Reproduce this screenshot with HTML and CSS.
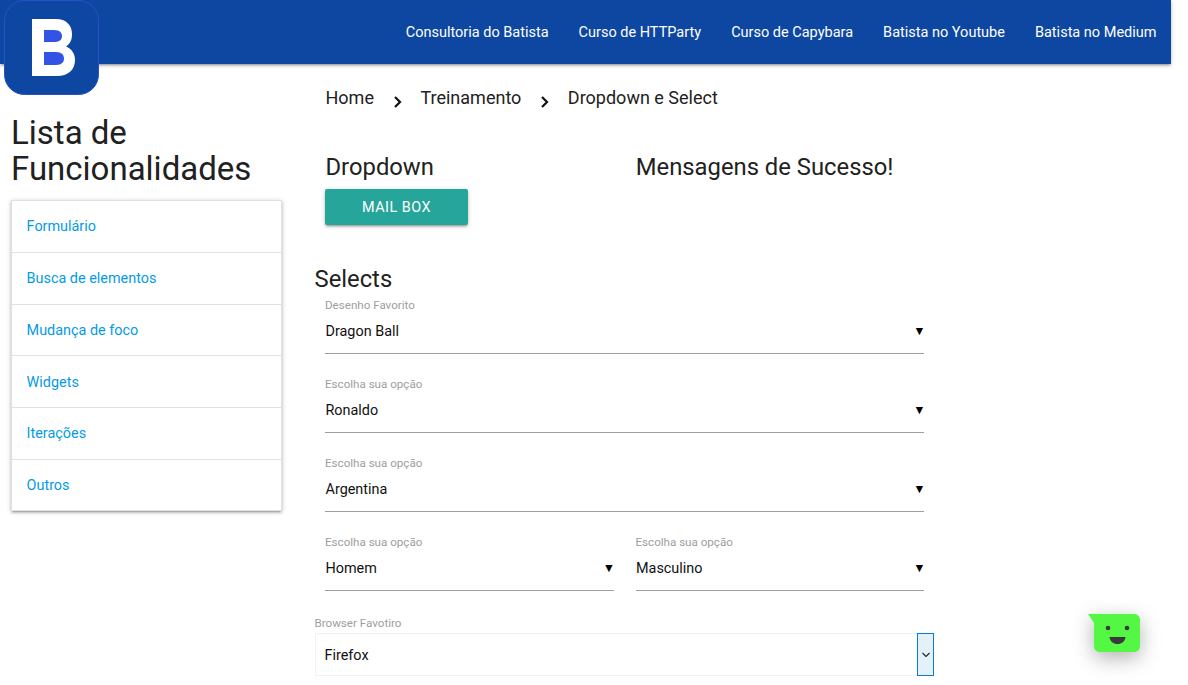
FILE: index.html
```html
<!DOCTYPE html>
<html lang="pt-BR">
<head>
  <meta charset="UTF-8">
  <meta name="viewport" content="width=device-width, initial-scale=1.0">
  <title>Dropdown e Select</title>
  <link rel="stylesheet" href="styles.css">
</head>
<body>
  <div class="page">
    <!-- barra do topo -->
    <nav class="topbar">
      <a href="#">Consultoria do Batista</a>
      <a href="#">Curso de HTTParty</a>
      <a href="#">Curso de Capybara</a>
      <a href="#">Batista no Youtube</a>
      <a href="#">Batista no Medium</a>
    </nav>
    <a class="logo" href="#" aria-label="Batista">
      <svg viewBox="0 0 95 95" width="95" height="95">
        <rect x="0.5" y="0.5" width="94" height="94" rx="20" fill="#0e47a1" stroke="#2b4fc4"/>
        <path fill="#fff" d="M28 19H52C62 19 68 25 68 34C68 40 66 44 62 46.500C68 49 71 54 71 60C71 70 64 76 53 76H28Z"/>
        <path fill="#3353e4" d="M40 30H50C56 30 58 33 58 36C58 39.500 56 42 50 42H40ZM40 52H52C58 52 60 55 60 58.500C60 62 58 65 52 65H40Z"/>
      </svg>
    </a>

    <div class="content">
      <!-- menu lateral -->
      <aside class="sidebar">
        <h3 class="sidebar-title">Lista de Funcionalidades</h3>
        <ul class="menu">
          <li><a href="#">Formulário</a></li>
          <li><a href="#">Busca de elementos</a></li>
          <li><a href="#">Mudança de foco</a></li>
          <li><a href="#">Widgets</a></li>
          <li><a href="#">Iterações</a></li>
          <li><a href="#">Outros</a></li>
        </ul>
      </aside>

      <main class="main">
        <div class="breadcrumb">
          <a href="#">Home</a>
          <svg class="crumb-arrow" viewBox="0 0 10 12" width="10" height="12"><path d="M2 1l5 5-5 5" fill="none" stroke="#111" stroke-width="2.200"/></svg>
          <a href="#">Treinamento</a>
          <svg class="crumb-arrow" viewBox="0 0 10 12" width="10" height="12"><path d="M2 1l5 5-5 5" fill="none" stroke="#111" stroke-width="2.200"/></svg>
          <a href="#">Dropdown e Select</a>
        </div>

        <div class="cols top-cols">
          <div class="col">
            <h5 class="section-title">Dropdown</h5>
            <button class="btn" type="button">MAIL BOX</button>
          </div>
          <div class="col">
            <h5 class="section-title">Mensagens de Sucesso!</h5>
          </div>
        </div>

        <h5 class="selects-title">Selects</h5>

        <div class="field">
          <label>Desenho Favorito</label>
          <div class="fake-select"><span>Dragon Ball</span><i>▼</i></div>
        </div>
        <div class="field">
          <label>Escolha sua opção</label>
          <div class="fake-select"><span>Ronaldo</span><i>▼</i></div>
        </div>
        <div class="field">
          <label>Escolha sua opção</label>
          <div class="fake-select"><span>Argentina</span><i>▼</i></div>
        </div>
        <div class="cols">
          <div class="field col">
            <label>Escolha sua opção</label>
            <div class="fake-select"><span>Homem</span><i>▼</i></div>
          </div>
          <div class="field col">
            <label>Escolha sua opção</label>
            <div class="fake-select"><span>Masculino</span><i>▼</i></div>
          </div>
        </div>

        <div class="browser-field">
          <label>Browser Favotiro</label>
          <div class="browser-select">
            <span>Firefox</span>
            <div class="browser-arrow">
              <svg viewBox="0 0 10 6" width="10" height="6"><path d="M1.500 1l3.500 3.500L8.500 1" fill="none" stroke="#222" stroke-width="1.100"/></svg>
            </div>
          </div>
        </div>
      </main>
    </div>
  </div>

  <!-- widget de chat -->
  <div class="chat-widget">
    <svg viewBox="0 0 52 38" width="52" height="38">
      <path fill="#55f745" d="M0 0H46C49.500 0 52 2.500 52 6V32C52 35.500 49.500 38 46 38H12C8.500 38 6 35.500 6 32V9Z"/>
      <circle cx="20" cy="14" r="2.300" fill="#3a3a3a"/>
      <circle cx="39" cy="14" r="2.300" fill="#3a3a3a"/>
      <path fill="#3a3a3a" d="M21.500 23H37.500C37 27.500 33.500 30 29.500 30C25.500 30 22 27.500 21.500 23Z"/>
    </svg>
  </div>
</body>
</html>
```

FILE: styles.css
```css
* {
  box-sizing: border-box;
}
html, body {
  height: 685px;
  overflow: hidden;
}
body {
  margin: 0;
  background: #fff;
  color: #212121;
  font-family: Roboto, "Liberation Sans", sans-serif;
  font-size: 15px;
}
a {
  text-decoration: none;
  color: inherit;
}
.page {
  position: relative;
  width: 1171px;
}
/* topo */
.topbar {
  height: 64px;
  background: #0d47a1;
  display: flex;
  justify-content: flex-end;
  align-items: center;
  gap: 30px;
  padding-right: 14.500px;
  box-shadow: 0 2px 2px 0 rgba(0,0,0,.14), 0 3px 1px -2px rgba(0,0,0,.12), 0 1px 5px 0 rgba(0,0,0,.2);
}
.topbar a {
  color: #fff;
  font-size: 14.500px;
}
.logo {
  position: absolute;
  left: 4px;
  top: 0;
  display: block;
  height: 95px;
}
.content {
  display: flex;
}
/* menu lateral */
.sidebar {
  width: 315px;
  padding: 51px 0 0 11px;
  flex: none;
}
.sidebar-title {
  margin: 0 0 13px;
  width: 270px;
  font-size: 33px;
  line-height: 36px;
  font-weight: 400;
}
.menu {
  list-style: none;
  margin: 0;
  padding: 0;
  width: 271px;
  border: 1px solid #e0e0e0;
  box-shadow: 0 2px 2px 0 rgba(0,0,0,.14), 0 3px 1px -2px rgba(0,0,0,.12), 0 1px 5px 0 rgba(0,0,0,.2);
}
.menu li {
  height: 51.750px;
  border-bottom: 1px solid #e0e0e0;
  display: flex;
  align-items: center;
  padding: 0.800px 0 0 14.600px;
}
.menu li:last-child {
  height: 50.250px;
  border-bottom: none;
}
.menu a {
  color: #039be5;
  font-size: 14.400px;
}
/* conteudo */
.main {
  width: 619px;
}
.breadcrumb {
  display: flex;
  align-items: center;
  height: 24px;
  margin: 21px 0 0 10.500px;
  font-size: 18px;
}
.crumb-arrow {
  margin: 10px 17.500px 0 19px;
}
.cols {
  display: flex;
  gap: 22px;
  padding-left: 10px;
  width: 609px;
}
.col {
  flex: 1;
  min-width: 0;
}
.top-cols {
  margin-top: 42px;
}
.section-title {
  margin: 0;
  font-size: 23.800px;
  line-height: 33px;
  font-weight: 400;
  padding-left: 0.500px;
  height: 33px;
}
.top-cols .col:last-child .section-title {
  padding-left: 0.300px;
}
.btn {
  display: block;
  margin-top: 5px;
  width: 143px;
  height: 36px;
  border: none;
  border-radius: 2px;
  background: #26a69a;
  color: #fff;
  font-family: inherit;
  font-size: 14.400px;
  letter-spacing: .5px;
  box-shadow: 0 2px 2px 0 rgba(0,0,0,.14), 0 3px 1px -2px rgba(0,0,0,.12), 0 1px 5px 0 rgba(0,0,0,.2);
}
.selects-title {
  margin: 38px 0 0 -0.500px;
  font-size: 23.800px;
  line-height: 32px;
  font-weight: 400;
  height: 35px;
}
.field {
  height: 79px;
}
.main > .field {
  margin-left: 10px;
  width: 599px;
}
.field label, .browser-field label {
  display: block;
  height: 15px;
  font-size: 11.600px;
  line-height: 15px;
  color: #9e9e9e;
}
.fake-select {
  display: flex;
  justify-content: space-between;
  align-items: center;
  height: 41px;
  padding: 0 1px 3px 0.500px;
  border-bottom: 1px solid #9e9e9e;
  font-size: 14.400px;
  color: #111;
}
.fake-select i {
  font-style: normal;
  font-size: 9.500px;
  color: #000;
  font-family: "DejaVu Sans", sans-serif;
  margin-bottom: 3px;
}
.browser-field {
  margin-top: 2px;
}
.browser-field label {
  margin-left: -0.500px;
}
.browser-select {
  display: flex;
  justify-content: space-between;
  align-items: stretch;
  height: 43px;
  margin-top: 2px;
  border: 1px solid #f2f2f2;
  font-size: 14.400px;
  color: #111;
}
.browser-select span {
  align-self: center;
  padding: 1px 0 0 8.500px;
}
.browser-arrow {
  width: 17px;
  margin: -1px -1px -1px 0;
  border: 1px solid #0a7bdc;
  background: #e3f1fb;
  display: flex;
  align-items: center;
  justify-content: center;
}
/* chat */
.chat-widget {
  position: fixed;
  left: 1088px;
  top: 614px;
  width: 52px;
  height: 38px;
  filter: drop-shadow(0 6px 10px rgba(0,0,0,.3));
}
```
